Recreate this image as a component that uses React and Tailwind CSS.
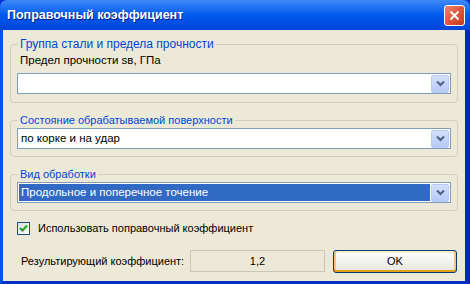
import React from 'react';

const font = { fontFamily: '"Liberation Sans", Arial, sans-serif' };

function DropButton() {
  return (
    <div className="w-[18px] h-[18px] shrink-0 rounded-[2px] border border-[#b9cbf3] bg-gradient-to-b from-[#d4e0fb] to-[#b6c9f4] flex items-center justify-center">
      <svg width="9" height="7" viewBox="0 0 9 7">
        <path d="M1 1.5 L4.5 5 L8 1.5" stroke="#4d6185" strokeWidth="2" fill="none" />
      </svg>
    </div>
  );
}

function Combo({ value, selected }) {
  return (
    <div className="h-[21px] border border-[#7f9db9] bg-white flex items-center pl-[1px] pr-[1px]">
      <div
        className={
          'flex-1 h-[17px] mr-[1px] flex items-center pl-[2px] text-[11.5px] ' +
          (selected ? 'bg-[#316ac5] text-white' : 'text-black')
        }
      >
        {value}
      </div>
      <DropButton />
    </div>
  );
}

function Group({ title, children, className, titleSize }) {
  return (
    <fieldset className={'border border-[#d0d0bf] rounded-[4px] mx-[7px] px-[6px] ' + className}>
      <legend className={'leading-[14px] text-[#0046d5] px-[2px] ml-[1px] ' + (titleSize || 'text-[11px]')}>{title}</legend>
      {children}
    </fieldset>
  );
}

export default function App() {
  return (
    <div className="w-[470px] h-[284px] flex flex-col bg-[#0831d9] overflow-hidden" style={font}>
      {/* Title bar */}
      <div className="h-[30px] shrink-0 rounded-t-[7px] bg-gradient-to-b from-[#3d8af7] via-[#0058ee] to-[#0046d8] flex items-center justify-between pl-[7px] pr-[5px]">
        <span className="text-white font-bold text-[12.5px] [text-shadow:1px_1px_#0a1e8a]">Поправочный коэффициент</span>
        <div className="w-[21px] h-[21px] rounded-[3px] border border-white bg-gradient-to-br from-[#e9866c] via-[#e0553a] to-[#c43c1e] flex items-center justify-center">
          <svg width="11" height="11" viewBox="0 0 11 11">
            <path d="M1.5 1.5 L9.5 9.5 M9.5 1.5 L1.5 9.5" stroke="white" strokeWidth="2" />
          </svg>
        </div>
      </div>

      {/* Body */}
      <div className="flex-1 min-h-0 flex border-l-[3px] border-l-[#0055e5] border-r-[5px] border-r-[#0029b8] border-b-[3px] border-b-[#0030c8]">
        <div className="flex-1 bg-[#ece9d8] flex flex-col pt-[7px]">
          <Group title="Группа стали и предела прочности" titleSize="text-[12px]" className="pb-[8px]">
            <div className="text-[11.5px] leading-[14px] text-black pl-[3px] pt-[2px]">Предел прочности sв, ГПа</div>
            <div className="mt-[6px]">
              <Combo value="" />
            </div>
          </Group>

          <Group title="Состояние обрабатываемой поверхности" className="mt-[10px] pb-[7px] pt-[1px]">
            <Combo value="по корке и на удар" />
          </Group>

          <Group title="Вид обработки" className="mt-[10px] pb-[7px] pt-[1px]">
            <Combo value="Продольное и поперечное точение" selected />
          </Group>

          {/* Checkbox */}
          <div className="flex items-center mt-[9px] ml-[14px]">
            <div className="w-[13px] h-[13px] border border-[#1c5180] bg-gradient-to-br from-[#dcdcd7] to-white flex items-center justify-center">
              <svg width="9" height="9" viewBox="0 0 9 9">
                <path d="M1 4 L3.5 6.5 L8 1.5" stroke="#21a121" strokeWidth="2" fill="none" />
              </svg>
            </div>
            <span className="ml-[8px] text-[11px] text-black">Использовать поправочный коэффициент</span>
          </div>

          {/* Result row */}
          <div className="flex items-center mt-[13px] ml-[18px] mr-[8px]">
            <span className="text-[11px] text-black w-[169px] shrink-0 whitespace-nowrap">Результирующий коэффициент:</span>
            <div className="w-[135px] h-[22px] shrink-0 border border-[#c9c7ba] bg-[#ece9d8] flex items-center justify-center text-[11px] text-black">
              1,2
            </div>
            <button className="ml-[8px] flex-1 h-[23px] rounded-[3px] border border-[#003c74] bg-gradient-to-b from-white to-[#e6e5de] shadow-[inset_0_-2px_0_#e5a01a,inset_2px_0_0_#f9c66b,inset_-2px_0_0_#f9c66b,inset_0_2px_0_#fff0cf] text-[11px] text-black">
              OK
            </button>
          </div>
        </div>
      </div>
    </div>
  );
}
